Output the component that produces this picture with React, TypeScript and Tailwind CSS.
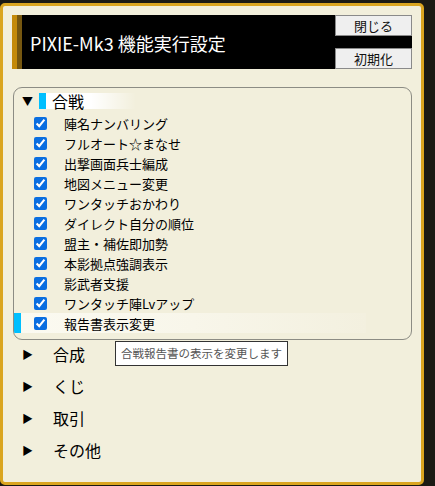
import React from "react";

const items = [
  "陣名ナンバリング",
  "フルオート☆まなせ",
  "出撃画面兵士編成",
  "地図メニュー変更",
  "ワンタッチおかわり",
  "ダイレクト自分の順位",
  "盟主・補佐即加勢",
  "本影拠点強調表示",
  "影武者支援",
  "ワンタッチ陣Lvアップ",
  "報告書表示変更",
];

const groups = ["合成", "くじ", "取引", "その他"];

const font = { fontFamily: '"Noto Sans CJK JP", "Noto Sans", sans-serif' };

export default function App() {
  return (
    <div className="w-[435px] h-[486px] bg-[#1b1a14] pt-[3px] overflow-hidden" style={font}>
      <div className="relative w-[424px] h-[482px] border-[3px] border-[#daa520] rounded-[5px] bg-[#f2efdc] pl-[9px] pt-[9px]">
        {/* header */}
        <div className="flex w-[400px] h-[54px] bg-black">
          <div className="w-[5px] bg-[#c48a0a]" />
          <div className="w-[5px] bg-[#765710]" />
          <div className="flex-1 flex items-center pl-[8px] pt-[2px] text-white text-[18px] leading-none">
            PIXIE-Mk3 機能実行設定
          </div>
          <div className="flex flex-col justify-between w-[77px]">
            <button className="h-[21px] bg-[#efefef] border border-[#8a8a8a] text-[13px] leading-none text-[#111]">
              閉じる
            </button>
            <button className="h-[21px] bg-[#efefef] border border-[#8a8a8a] text-[13px] leading-none text-[#111]">
              初期化
            </button>
          </div>
        </div>

        {/* 合戦 group */}
        <div className="mt-[18px] ml-[1px] w-[399px] h-[253px] border border-[#8c8c84] rounded-[9px] pt-[5px] overflow-hidden">
          <div className="flex items-center h-[16px]">
            <span className="w-[10px] ml-[8px] text-[11px] leading-none text-black">▼</span>
            <span className="w-[7px] h-[16px] ml-[7px] bg-[#00bfff]" />
            <span className="flex items-center h-[16px] w-[90px] pl-[6px] text-[16px] leading-none text-black bg-gradient-to-r from-white via-white to-transparent">
              合戦
            </span>
          </div>
          <div className="mt-[4px] flex flex-col">
            {items.map((t, i) => {
              const last = i === items.length - 1;
              return (
                <div key={t} className="flex items-center h-[20px]">
                  <span className={`w-[7px] h-[20px] ${last ? "bg-[#00bfff]" : ""}`} />
                  <div
                    className={`flex items-center h-[20px] w-[345px] ${
                      last ? "bg-gradient-to-r from-[#fbfaf1] via-[#f8f6ea] to-[#f3f0df]" : ""
                    }`}
                  >
                    <input
                      type="checkbox"
                      defaultChecked
                      className="ml-[13px] w-[13px] h-[13px] m-0 accent-[#0a6ee0]"
                    />
                    <span className="ml-[17px] text-[13px] leading-none text-black">{t}</span>
                  </div>
                </div>
              );
            })}
          </div>
        </div>

        {/* other groups */}
        <div className="flex flex-col mt-[-2px]">
          {groups.map((g) => (
            <div key={g} className="flex items-center h-[32px]">
              <span className="ml-[10px] w-[10px] text-[11px] leading-none text-black">▶</span>
              <span className="ml-[21px] text-[16px] leading-none text-black">{g}</span>
            </div>
          ))}
        </div>

        {/* tooltip */}
        <div className="absolute left-[112px] top-[335px] h-[25px] px-[5px] flex items-center bg-white border border-[#333] text-[11.5px] leading-none text-[#555]">
          合戦報告書の表示を変更します
        </div>
      </div>
    </div>
  );
}
